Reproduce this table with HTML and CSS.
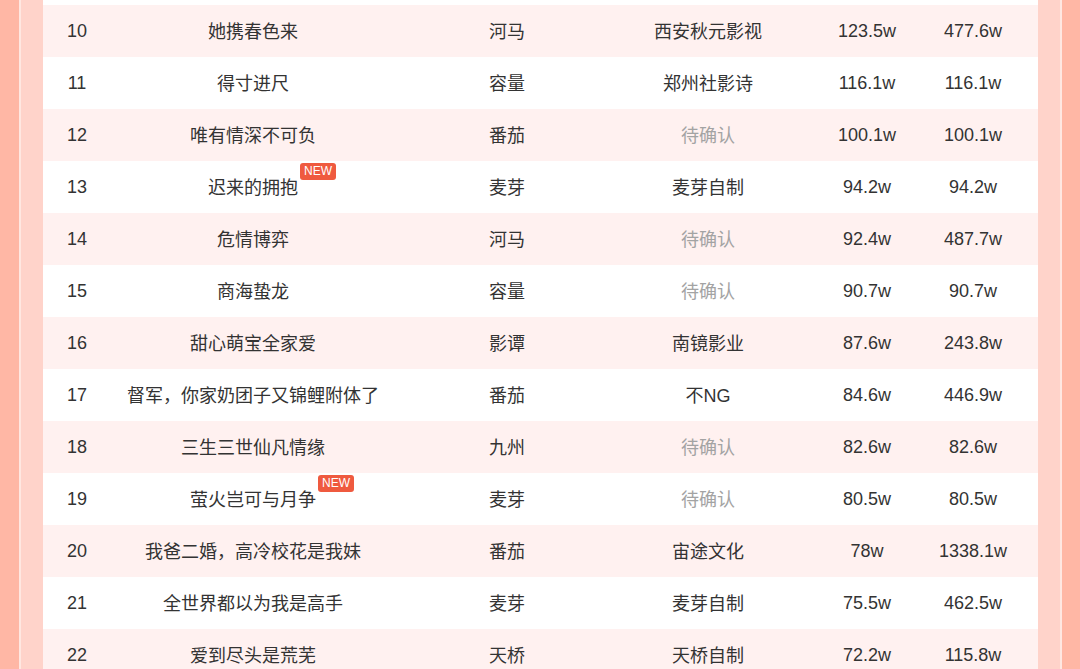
FILE: index.html
```html
<!DOCTYPE html>
<html lang="zh">
<head>
<meta charset="utf-8">
<link rel="stylesheet" href="styles.css">
</head>
<body>
<div class="frame">
  <div class="table">
    <div class="row row-top"></div>
    <div class="row pink"><div class="c rank">10</div><div class="c title"><span class="t">她携春色来</span></div><div class="c plat">河马</div><div class="c comp">西安秋元影视</div><div class="c n1">123.5w</div><div class="c n2">477.6w</div></div>
    <div class="row"><div class="c rank">11</div><div class="c title"><span class="t">得寸进尺</span></div><div class="c plat">容量</div><div class="c comp">郑州社影诗</div><div class="c n1">116.1w</div><div class="c n2">116.1w</div></div>
    <div class="row pink"><div class="c rank">12</div><div class="c title"><span class="t">唯有情深不可负</span></div><div class="c plat">番茄</div><div class="c comp muted">待确认</div><div class="c n1">100.1w</div><div class="c n2">100.1w</div></div>
    <div class="row"><div class="c rank">13</div><div class="c title"><span class="t">迟来的拥抱<span class="badge">NEW</span></span></div><div class="c plat">麦芽</div><div class="c comp">麦芽自制</div><div class="c n1">94.2w</div><div class="c n2">94.2w</div></div>
    <div class="row pink"><div class="c rank">14</div><div class="c title"><span class="t">危情博弈</span></div><div class="c plat">河马</div><div class="c comp muted">待确认</div><div class="c n1">92.4w</div><div class="c n2">487.7w</div></div>
    <div class="row"><div class="c rank">15</div><div class="c title"><span class="t">商海蛰龙</span></div><div class="c plat">容量</div><div class="c comp muted">待确认</div><div class="c n1">90.7w</div><div class="c n2">90.7w</div></div>
    <div class="row pink"><div class="c rank">16</div><div class="c title"><span class="t">甜心萌宝全家爱</span></div><div class="c plat">影谭</div><div class="c comp">南镜影业</div><div class="c n1">87.6w</div><div class="c n2">243.8w</div></div>
    <div class="row"><div class="c rank">17</div><div class="c title"><span class="t">督军，你家奶团子又锦鲤附体了</span></div><div class="c plat">番茄</div><div class="c comp">不NG</div><div class="c n1">84.6w</div><div class="c n2">446.9w</div></div>
    <div class="row pink"><div class="c rank">18</div><div class="c title"><span class="t">三生三世仙凡情缘</span></div><div class="c plat">九州</div><div class="c comp muted">待确认</div><div class="c n1">82.6w</div><div class="c n2">82.6w</div></div>
    <div class="row"><div class="c rank">19</div><div class="c title"><span class="t">萤火岂可与月争<span class="badge">NEW</span></span></div><div class="c plat">麦芽</div><div class="c comp muted">待确认</div><div class="c n1">80.5w</div><div class="c n2">80.5w</div></div>
    <div class="row pink"><div class="c rank">20</div><div class="c title"><span class="t">我爸二婚，高冷校花是我妹</span></div><div class="c plat">番茄</div><div class="c comp">宙途文化</div><div class="c n1">78w</div><div class="c n2">1338.1w</div></div>
    <div class="row"><div class="c rank">21</div><div class="c title"><span class="t">全世界都以为我是高手</span></div><div class="c plat">麦芽</div><div class="c comp">麦芽自制</div><div class="c n1">75.5w</div><div class="c n2">462.5w</div></div>
    <div class="row pink"><div class="c rank">22</div><div class="c title"><span class="t">爱到尽头是荒芜</span></div><div class="c plat">天桥</div><div class="c comp">天桥自制</div><div class="c n1">72.2w</div><div class="c n2">115.8w</div></div>
  </div>
</div>
</body>
</html>
```

FILE: styles.css
```css
html, body {
  margin: 0;
  padding: 0;
  height: 669px;
  overflow: hidden;
}
body {
  background: #ffb7a5;
  font-family: "Liberation Sans", "Noto Sans CJK SC", sans-serif;
  color: #333333;
}
.frame {
  margin: 0 18px 0 19px;
  border-left: 2px solid #ffe7e1;
  border-right: 2px solid #ffe7e1;
  background: #ffd3ca;
  padding: 0 22px;
  height: 669px;
}
.table {
  background: #ffffff;
  height: 669px;
}
.row {
  display: grid;
  grid-template-columns: 68px 284px 224px 178px 140px 72px 1fr;
  height: 52px;
  align-items: center;
  background: #ffffff;
  font-size: 18px;
}
.row-top {
  height: 5px;
}
.row.pink {
  background: #fff1f0;
}
.c {
  text-align: center;
  white-space: nowrap;
}
.title, .plat, .comp {
  position: relative;
  top: -1px;
}
.t {
  position: relative;
}
.muted {
  color: #a3a3a3;
}
.badge {
  position: absolute;
  left: 100%;
  top: -15px;
  margin-left: 2px;
  background: #ef5a3f;
  color: #ffffff;
  font-family: "Liberation Sans", sans-serif;
  font-size: 12px;
  line-height: 17px;
  padding: 0 4px;
  border-radius: 3px;
}
```
